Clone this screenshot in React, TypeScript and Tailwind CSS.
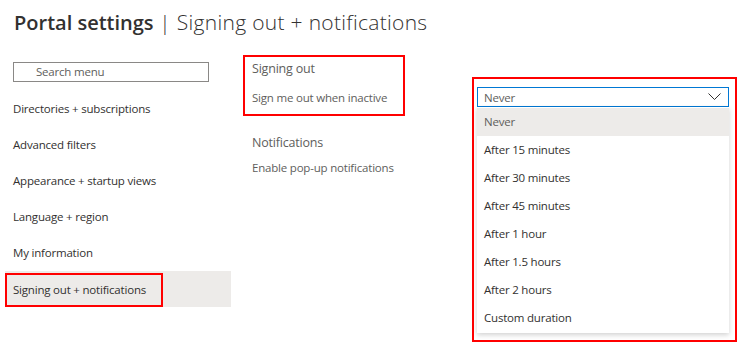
import { useState } from 'react'

const menuItems = [
  'Directories + subscriptions',
  'Advanced filters',
  'Appearance + startup views',
  'Language + region',
  'My information',
  'Signing out + notifications',
]

const timeoutOptions = [
  'Never',
  'After 15 minutes',
  'After 30 minutes',
  'After 45 minutes',
  'After 1 hour',
  'After 1.5 hours',
  'After 2 hours',
  'Custom duration',
]

export default function App() {
  const [selected] = useState('Signing out + notifications')
  const [timeout] = useState('Never')

  return (
    <div className="w-[752px] h-[356px] bg-white text-[#323130] font-['Open_Sans',sans-serif] overflow-hidden">
      <h1 className="pl-[14px] pt-[8px] h-[55px] text-[20px] leading-[28px]">
        <span className="font-semibold">Portal settings</span>
        <span className="font-light text-[21px] tracking-[0.3px]"> | Signing out + notifications</span>
      </h1>

      <div className="flex items-start text-[11.5px] tracking-[-0.2px]">
        {/* left nav */}
        <div className="ml-[5px] w-[226px] pt-[7px]">
          <div className="ml-[8px] w-[196px] h-[20px] border border-[#8a8886] flex items-center pl-[22px] text-[#605e5c]">
            Search menu
          </div>
          <div className="mt-[9px]">
            {menuItems.map((item) => (
              <div
                key={item}
                className={`h-[36px] flex items-center ${item === selected ? 'bg-[#edebe9]' : ''}`}
              >
                {item === selected ? (
                  <span className="h-[34px] w-[158px] border-2 border-[#ff0000] flex items-center pl-[6px] mt-[2px]">
                    {item}
                  </span>
                ) : (
                  <span className="pl-[8px]">{item}</span>
                )}
              </div>
            ))}
          </div>
        </div>

        {/* middle section */}
        <div className="ml-[12px] w-[229px] text-[#605e5c]">
          <div className="w-[162px] h-[61px] border-2 border-[#ff0000] pl-[7px]">
            <div className="text-[12.5px] leading-[18px] mt-[3px]">Signing out</div>
            <div className="leading-[16px] mt-[12px]">Sign me out when inactive</div>
          </div>
          <div className="pl-[9px] mt-[18px]">
            <div className="text-[12.5px] leading-[18px]">Notifications</div>
            <div className="leading-[16px] mt-[8px]">Enable pop-up notifications</div>
          </div>
        </div>

        {/* dropdown */}
        <div className="mt-[22px] w-[265px] h-[265px] border-2 border-[#ff0000] pl-[3px] pr-[6px] pt-[8px]">
          <div className="h-[20px] border border-[#0078d4] flex items-center justify-between pl-[6px] pr-[7px] text-[#605e5c]">
            <span className="mt-[1px]">{timeout}</span>
            <svg width="13" height="8" viewBox="0 0 13 8" fill="none" stroke="#323130" strokeWidth="1">
              <polyline points="0.5,0.5 6.5,6.5 12.5,0.5" />
            </svg>
          </div>
          <div className="bg-white shadow-[0_2px_5px_rgba(0,0,0,0.18)] pt-[1px] pb-[1px]">
            {timeoutOptions.map((opt) => (
              <div
                key={opt}
                className={`h-[28px] flex items-center pl-[7px] ${
                  opt === timeout ? 'bg-[#edebe9] text-[#605e5c]' : 'text-[#323130]'
                }`}
              >
                {opt}
              </div>
            ))}
          </div>
        </div>
      </div>
    </div>
  )
}
